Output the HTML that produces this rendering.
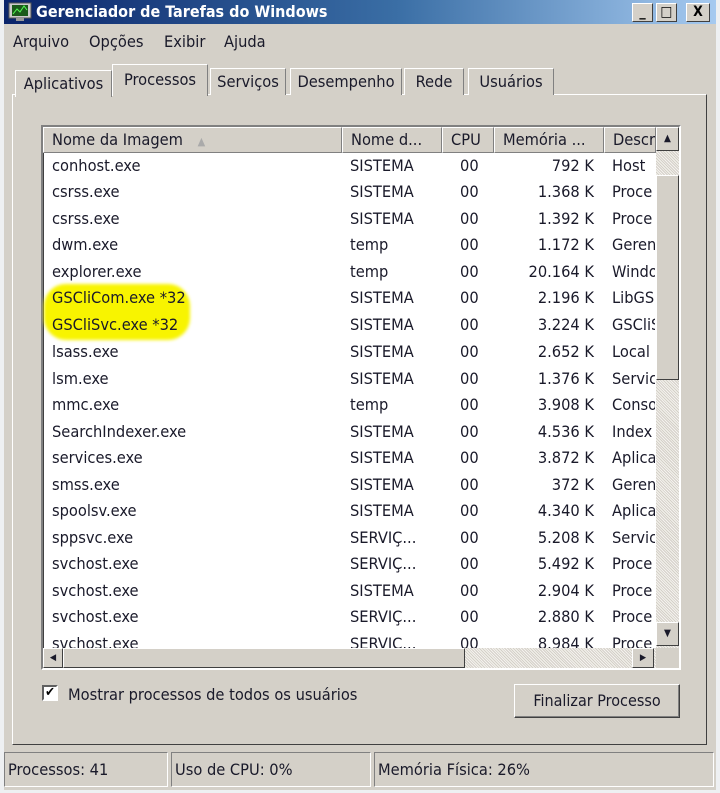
<!DOCTYPE html>
<html><head><meta charset="utf-8"><style>
*{margin:0;padding:0;box-sizing:border-box}
body{width:720px;height:793px;background:#eef0f2;position:relative;overflow:hidden;font-family:"DejaVu Sans Condensed","Liberation Sans",sans-serif;font-size:16.3px;color:#1a1a2a}
.a{position:absolute}
#win{left:4px;top:0;width:712px;height:790px;background:#d4d0c8}
#title{left:4px;top:0;width:712px;height:24px;background:linear-gradient(90deg,#0a246a 0%,#3a6ea5 55%,#a6caf0 100%)}
#title span{position:absolute;left:32px;top:2px;color:#fff;font-weight:bold;font-size:16px;font-family:"DejaVu Sans Condensed",sans-serif}
.tb{top:3px;width:21px;height:19px;background:#d4d0c8;border:1px solid;border-color:#fff #404040 #404040 #fff;font-weight:bold;text-align:center;font-size:14px;line-height:17px;color:#000}
.menu{top:32px;font-size:16.3px}
.tab{top:68px;height:27px;border:1px solid;border-color:#fff #808080 transparent #fff;border-bottom:none;text-align:center;line-height:26px;font-size:16.3px;background:#d4d0c8;white-space:nowrap}
#panel{left:12px;top:94px;width:695px;height:651px;border:1px solid;border-color:#fff #404040 #404040 #fff}
#list{left:41px;top:125px;width:640px;height:545px;background:#fff;border:2px solid;border-color:#808080 #fff #fff #808080;box-shadow:inset 1px 1px 0 #404040}
.hd{top:127px;height:26px;background:#d4d0c8;border:1px solid;border-color:#fff #808080 #808080 #fff;line-height:24px;padding-left:8px;font-size:16.3px;overflow:hidden;white-space:nowrap}
.row{position:absolute;left:52px;height:26px;line-height:26px;font-size:16.3px;white-space:nowrap}
.c{position:absolute;top:0}
.sb{background:#d4d0c8;border:1px solid;border-color:#fff #404040 #404040 #fff}
.track{background-color:#e8e6e0;background-image:repeating-linear-gradient(45deg,#d4d0c8 0 1px,#f4f2ee 1px 2px)}
.st{top:752px;height:35px;border:1px solid;border-color:#808080 #fff #fff #808080;line-height:33px;font-size:16.3px;padding-left:3px}
</style></head><body>
<div id="win" class="a"></div>
<div id="title" class="a"><svg class="a" style="left:4px;top:2px" width="24" height="20"><rect x="1" y="1" width="22" height="15" fill="#ccc" stroke="#555"/><rect x="4" y="3" width="16" height="11" fill="#1a5a1a"/><path d="M5 12 L9 7 L12 10 L16 4 L19 8" stroke="#5f5" fill="none"/><rect x="8" y="16" width="8" height="3" fill="#999"/></svg><span>Gerenciador de Tarefas do Windows</span></div>
<div class="a tb" style="left:632px">_</div><div class="a tb" style="left:656px">□</div><div class="a tb" style="left:686px;width:24px">X</div>
<div class="a menu" style="left:13px">Arquivo</div><div class="a menu" style="left:89px">Opções</div><div class="a menu" style="left:164px">Exibir</div><div class="a menu" style="left:224px">Ajuda</div>
<div id="panel" class="a"></div>
<div class="a tab" style="left:15px;top:70px;width:97px">Aplicativos</div>
<div class="a tab" style="left:112px;top:64px;width:96px;height:32px;line-height:30px;z-index:2">Processos</div>
<div class="a tab" style="left:210px;width:76px">Serviços</div>
<div class="a tab" style="left:290px;width:112px">Desempenho</div>
<div class="a tab" style="left:404px;width:60px">Rede</div>
<div class="a tab" style="left:468px;width:86px">Usuários</div>
<div id="list" class="a"></div>
<div class="a hd" style="left:43px;width:299px">Nome da Imagem <span style="color:#aaa;font-size:11px;margin-left:10px">▲</span></div>
<div class="a hd" style="left:342px;width:100px">Nome d...</div>
<div class="a hd" style="left:442px;width:52px">CPU</div>
<div class="a hd" style="left:494px;width:110px">Memória ...</div>
<div class="a hd" style="left:604px;width:52px">Descr</div>
<div class="a track" style="left:656px;top:127px;width:23px;height:521px"></div>
<div class="a sb" style="left:656px;top:127px;width:23px;height:24px;text-align:center;font-size:10px;line-height:22px">▲</div>
<div class="a sb" style="left:656px;top:175px;width:23px;height:205px"></div>
<div class="a sb" style="left:656px;top:622px;width:23px;height:24px;text-align:center;font-size:10px;line-height:22px">▼</div>
<div class="a" style="left:44px;top:284px;width:146px;height:56px;background:#f8f400;border-radius:22px;filter:blur(1.5px)"></div>
<div class="a" style="left:43px;top:153px;width:612px;height:495px;overflow:hidden">
<div style="position:relative;left:-43px;top:-153px">
<div class="row" style="top:153px"><span class="c">conhost.exe</span><span class="c" style="left:298px">SISTEMA</span><span class="c" style="left:408px">00</span><span class="c" style="right:-542px">792 K</span><span class="c" style="left:560px">Host </span></div>
<div class="row" style="top:179px"><span class="c">csrss.exe</span><span class="c" style="left:298px">SISTEMA</span><span class="c" style="left:408px">00</span><span class="c" style="right:-542px">1.368 K</span><span class="c" style="left:560px">Proce</span></div>
<div class="row" style="top:206px"><span class="c">csrss.exe</span><span class="c" style="left:298px">SISTEMA</span><span class="c" style="left:408px">00</span><span class="c" style="right:-542px">1.392 K</span><span class="c" style="left:560px">Proce</span></div>
<div class="row" style="top:232px"><span class="c">dwm.exe</span><span class="c" style="left:298px">temp</span><span class="c" style="left:408px">00</span><span class="c" style="right:-542px">1.172 K</span><span class="c" style="left:560px">Geren</span></div>
<div class="row" style="top:259px"><span class="c">explorer.exe</span><span class="c" style="left:298px">temp</span><span class="c" style="left:408px">00</span><span class="c" style="right:-542px">20.164 K</span><span class="c" style="left:560px">Windo</span></div>
<div class="row" style="top:285px"><span class="c">GSCliCom.exe *32</span><span class="c" style="left:298px">SISTEMA</span><span class="c" style="left:408px">00</span><span class="c" style="right:-542px">2.196 K</span><span class="c" style="left:560px">LibGS</span></div>
<div class="row" style="top:312px"><span class="c">GSCliSvc.exe *32</span><span class="c" style="left:298px">SISTEMA</span><span class="c" style="left:408px">00</span><span class="c" style="right:-542px">3.224 K</span><span class="c" style="left:560px">GSCliS</span></div>
<div class="row" style="top:339px"><span class="c">lsass.exe</span><span class="c" style="left:298px">SISTEMA</span><span class="c" style="left:408px">00</span><span class="c" style="right:-542px">2.652 K</span><span class="c" style="left:560px">Local </span></div>
<div class="row" style="top:366px"><span class="c">lsm.exe</span><span class="c" style="left:298px">SISTEMA</span><span class="c" style="left:408px">00</span><span class="c" style="right:-542px">1.376 K</span><span class="c" style="left:560px">Servic</span></div>
<div class="row" style="top:392px"><span class="c">mmc.exe</span><span class="c" style="left:298px">temp</span><span class="c" style="left:408px">00</span><span class="c" style="right:-542px">3.908 K</span><span class="c" style="left:560px">Conso</span></div>
<div class="row" style="top:419px"><span class="c">SearchIndexer.exe</span><span class="c" style="left:298px">SISTEMA</span><span class="c" style="left:408px">00</span><span class="c" style="right:-542px">4.536 K</span><span class="c" style="left:560px">Index</span></div>
<div class="row" style="top:445px"><span class="c">services.exe</span><span class="c" style="left:298px">SISTEMA</span><span class="c" style="left:408px">00</span><span class="c" style="right:-542px">3.872 K</span><span class="c" style="left:560px">Aplica</span></div>
<div class="row" style="top:472px"><span class="c">smss.exe</span><span class="c" style="left:298px">SISTEMA</span><span class="c" style="left:408px">00</span><span class="c" style="right:-542px">372 K</span><span class="c" style="left:560px">Geren</span></div>
<div class="row" style="top:498px"><span class="c">spoolsv.exe</span><span class="c" style="left:298px">SISTEMA</span><span class="c" style="left:408px">00</span><span class="c" style="right:-542px">4.340 K</span><span class="c" style="left:560px">Aplica</span></div>
<div class="row" style="top:525px"><span class="c">sppsvc.exe</span><span class="c" style="left:298px">SERVIÇ...</span><span class="c" style="left:408px">00</span><span class="c" style="right:-542px">5.208 K</span><span class="c" style="left:560px">Servic</span></div>
<div class="row" style="top:551px"><span class="c">svchost.exe</span><span class="c" style="left:298px">SERVIÇ...</span><span class="c" style="left:408px">00</span><span class="c" style="right:-542px">5.492 K</span><span class="c" style="left:560px">Proce</span></div>
<div class="row" style="top:578px"><span class="c">svchost.exe</span><span class="c" style="left:298px">SISTEMA</span><span class="c" style="left:408px">00</span><span class="c" style="right:-542px">2.904 K</span><span class="c" style="left:560px">Proce</span></div>
<div class="row" style="top:604px"><span class="c">svchost.exe</span><span class="c" style="left:298px">SERVIÇ...</span><span class="c" style="left:408px">00</span><span class="c" style="right:-542px">2.880 K</span><span class="c" style="left:560px">Proce</span></div>
<div class="row" style="top:631px"><span class="c">svchost.exe</span><span class="c" style="left:298px">SERVIÇ...</span><span class="c" style="left:408px">00</span><span class="c" style="right:-542px">8.984 K</span><span class="c" style="left:560px">Proce</span></div>
</div></div>
<div class="a track" style="left:43px;top:648px;width:613px;height:20px"></div>
<div class="a sb" style="left:43px;top:648px;width:20px;height:20px;font-size:9px;text-align:center;line-height:18px">◀</div>
<div class="a sb" style="left:63px;top:648px;width:402px;height:20px"></div>
<div class="a sb" style="left:632px;top:648px;width:22px;height:20px;font-size:9px;text-align:center;line-height:18px">▶</div>
<div class="a" style="left:656px;top:648px;width:23px;height:20px;background:#d4d0c8"></div>
<div class="a" style="left:42px;top:685px;width:16px;height:16px;background:#fff;border:2px solid;border-color:#606060 #fff #fff #606060;font-size:13px;line-height:12px;text-align:center;font-weight:bold;color:#000">✔</div>
<div class="a" style="left:68px;top:685px;font-size:16.3px">Mostrar processos de todos os usuários</div>
<div class="a" style="left:514px;top:684px;width:166px;height:34px;border:1px solid;border-color:#fff #404040 #404040 #fff;box-shadow:inset -1px -1px 0 #808080;text-align:center;line-height:32px;font-size:16px">Finalizar Processo</div>
<div class="a st" style="left:4px;width:164px">Processos: 41</div>
<div class="a st" style="left:171px;width:200px">Uso de CPU: 0%</div>
<div class="a st" style="left:374px;width:340px">Memória Física: 26%</div>
</body></html>
